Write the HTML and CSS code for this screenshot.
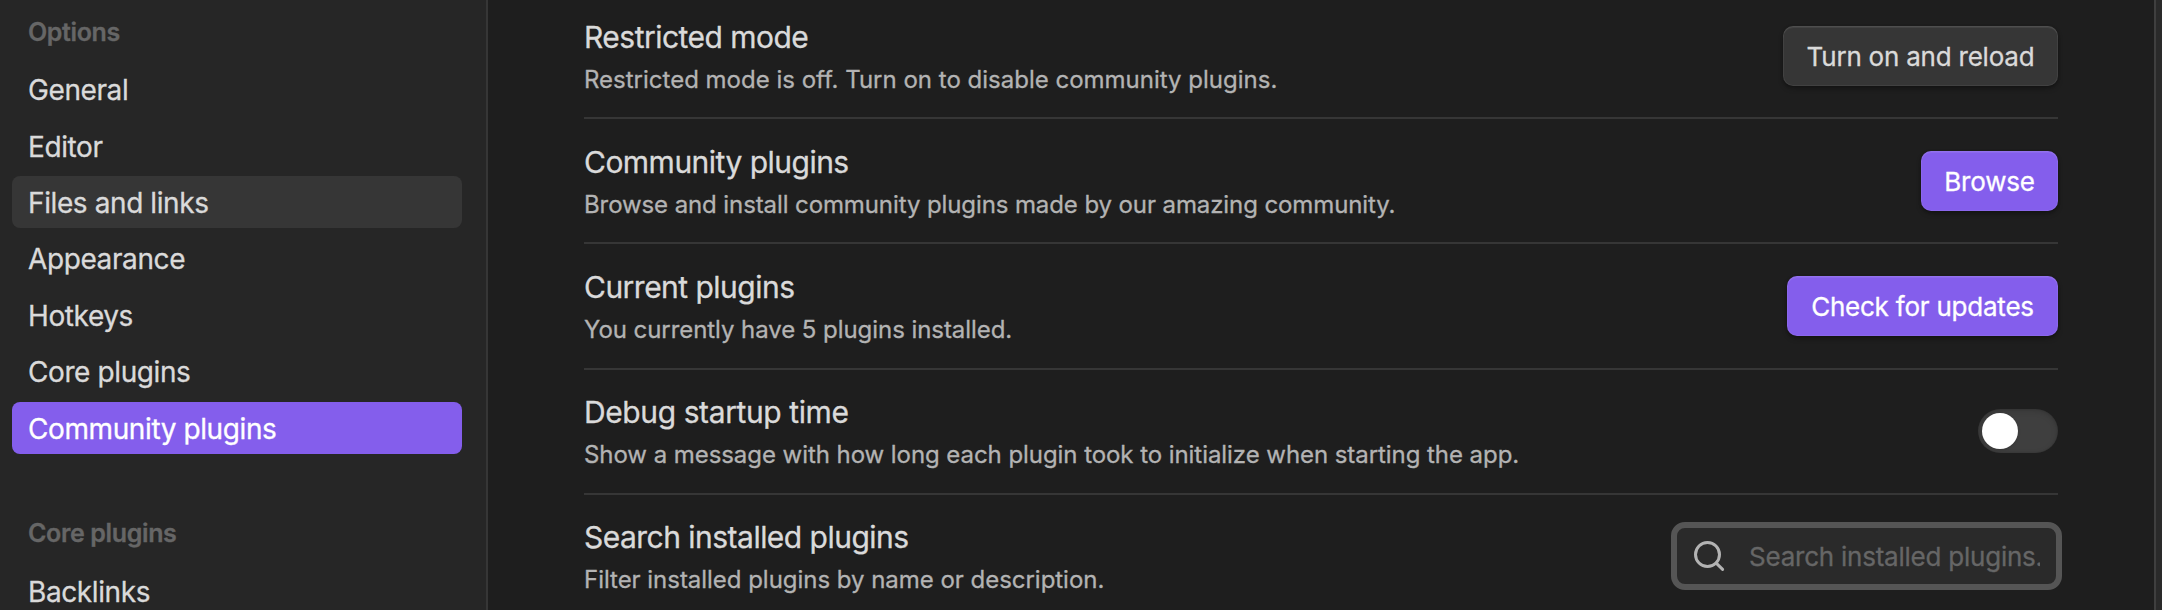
FILE: index.html
```html
<!DOCTYPE html>
<html lang="en">
<head>
<meta charset="utf-8">
<title>Settings</title>
<link rel="stylesheet" href="styles.css">
</head>
<body>
<div class="app">
  <nav class="sidebar">
    <div class="group-title">Options</div>
    <div class="nav-list">
      <div class="nav-item">General</div>
      <div class="nav-item">Editor</div>
      <div class="nav-item hovered">Files and links</div>
      <div class="nav-item">Appearance</div>
      <div class="nav-item">Hotkeys</div>
      <div class="nav-item">Core plugins</div>
      <div class="nav-item active">Community plugins</div>
    </div>
    <div class="group-title second">Core plugins</div>
    <div class="nav-list">
      <div class="nav-item">Backlinks</div>
    </div>
  </nav>
  <main class="content">
    <section class="setting">
      <div class="info">
        <div class="name">Restricted mode</div>
        <div class="desc off">Restricted mode is off. Turn on to disable community plugins.</div>
      </div>
      <button class="button reload">Turn on and reload</button>
    </section>
    <section class="setting">
      <div class="info">
        <div class="name">Community plugins</div>
        <div class="desc install">Browse and install community plugins made by our amazing community.</div>
      </div>
      <button class="button cta browse">Browse</button>
    </section>
    <section class="setting">
      <div class="info">
        <div class="name">Current plugins</div>
        <div class="desc">You currently have 5 plugins installed.</div>
      </div>
      <button class="button cta check">Check for updates</button>
    </section>
    <section class="setting">
      <div class="info">
        <div class="name debug">Debug startup time</div>
        <div class="desc">Show a message with how long each plugin took to initialize when starting the app.</div>
      </div>
      <div class="toggle"><div class="knob"></div></div>
    </section>
    <section class="setting last">
      <div class="info">
        <div class="name">Search installed plugins</div>
        <div class="desc">Filter installed plugins by name or description.</div>
      </div>
      <div class="search">
        <svg class="search-icon" viewBox="0 0 32 32" width="32" height="32" fill="none" stroke="#b3b3b3" stroke-width="3" stroke-linecap="round">
          <circle cx="14.5" cy="14.5" r="12"/>
          <path d="M23.2 23.2L29.6 29.4"/>
        </svg>
        <div class="placeholder">Search installed plugins...</div>
      </div>
    </section>
  </main>
  <div class="edge"></div>
</div>
</body>
</html>
```
FILE: styles.css
```css
* { box-sizing: border-box; }
body {
  margin: 0;
  background: #1e1e1e;
  color: #dadada;
  font-family: Inter, "Liberation Sans", sans-serif;
  -webkit-text-stroke: 0.3px currentColor;
}
.app {
  display: flex;
  height: 610px;
  overflow: hidden;
}
.sidebar {
  flex: none;
  width: 488px;
  height: 610px;
  padding: 14px 24px 0 12px;
  background: #262626;
  border-right: 2px solid #363636;
  overflow: hidden;
}
.group-title {
  padding-left: 16px;
  margin-bottom: 13.2px;
  font-size: 25px;
  font-weight: 600;
  line-height: 36px;
  letter-spacing: -0.36px;
  color: #666;
}
.group-title.second {
  margin: 61.4px 0 13.9px;
}
.nav-list {
  display: flex;
  flex-direction: column;
  gap: 4px;
}
.nav-item {
  height: 52.4px;
  padding-left: 16px;
  border-radius: 8px;
  font-size: 28px;
  line-height: 54.8px;
  letter-spacing: -0.4px;
  white-space: nowrap;
}
.nav-item.hovered { background: #363636; }
.nav-item.active { background: #845eec; color: #fff; }
.content {
  flex: 1;
  height: 610px;
  padding: 0 96px;
  overflow: hidden;
}
.setting {
  display: flex;
  justify-content: space-between;
  align-items: center;
  height: 125.3px;
  border-bottom: 2px solid #363636;
}
.setting:first-child { margin-top: -6.3px; }
.setting.last { border-bottom-color: transparent; }
.info {
  display: flex;
  flex-direction: column;
  gap: 7px;
  padding-top: 2.4px;
  white-space: nowrap;
}
.last .info { padding-top: 0.8px; }
.name {
  font-size: 30px;
  line-height: 39px;
  letter-spacing: -0.52px;
}
.name.debug { letter-spacing: -0.4px; }
.desc {
  font-size: 24px;
  line-height: 32px;
  letter-spacing: -0.06px;
  color: #b3b3b3;
}
.desc.off { letter-spacing: 0; }
.desc.install { letter-spacing: -0.1px; }
.last .desc { letter-spacing: -0.03px; }
.button {
  flex: none;
  height: 60px;
  padding: 2px 0 0;
  border: 0;
  border-radius: 10px;
  background: #363636;
  color: #dadada;
  font: 400 26px Inter, "Liberation Sans", sans-serif;
  letter-spacing: -0.22px;
  box-shadow: inset 0 2px 1px rgba(255, 255, 255, .07), inset 0 0 0 1px rgba(255, 255, 255, .06), 0 3px 5px rgba(0, 0, 0, .25), 0 1px 3px rgba(0, 0, 0, .2);
}
.button.cta { background: #845eec; color: #fff; }
.reload { width: 275px; margin-top: 1px; }
.browse { width: 137px; }
.check { width: 271px; }
.toggle {
  flex: none;
  width: 80px;
  height: 44px;
  padding: 4px;
  border-radius: 22px;
  background: #3f3f3f;
  box-shadow: inset 0 2px 6px rgba(0, 0, 0, .15), inset 0 0 2px rgba(0, 0, 0, .2);
}
.knob {
  width: 36px;
  height: 36px;
  border-radius: 50%;
  background: #fff;
  box-shadow: 0 1px 3px rgba(0, 0, 0, .15);
}
.search {
  display: flex;
  flex: none;
  align-items: center;
  width: 391px;
  height: 68px;
  margin: 0 -4px 1px 0;
  padding: 0 16px;
  border: 6px solid #555;
  border-radius: 14px;
  background: #2a2a2a;
}
.search-icon { flex: none; }
.placeholder {
  flex: 1;
  margin-left: 24px;
  padding-top: 2px;
  overflow: hidden;
  font-size: 26px;
  line-height: 36px;
  letter-spacing: -0.23px;
  white-space: nowrap;
  color: #666;
}
.edge {
  flex: none;
  width: 8px;
  height: 610px;
  background: #2a2a2a;
  border-left: 2px solid #3f3f3f;
}
```
